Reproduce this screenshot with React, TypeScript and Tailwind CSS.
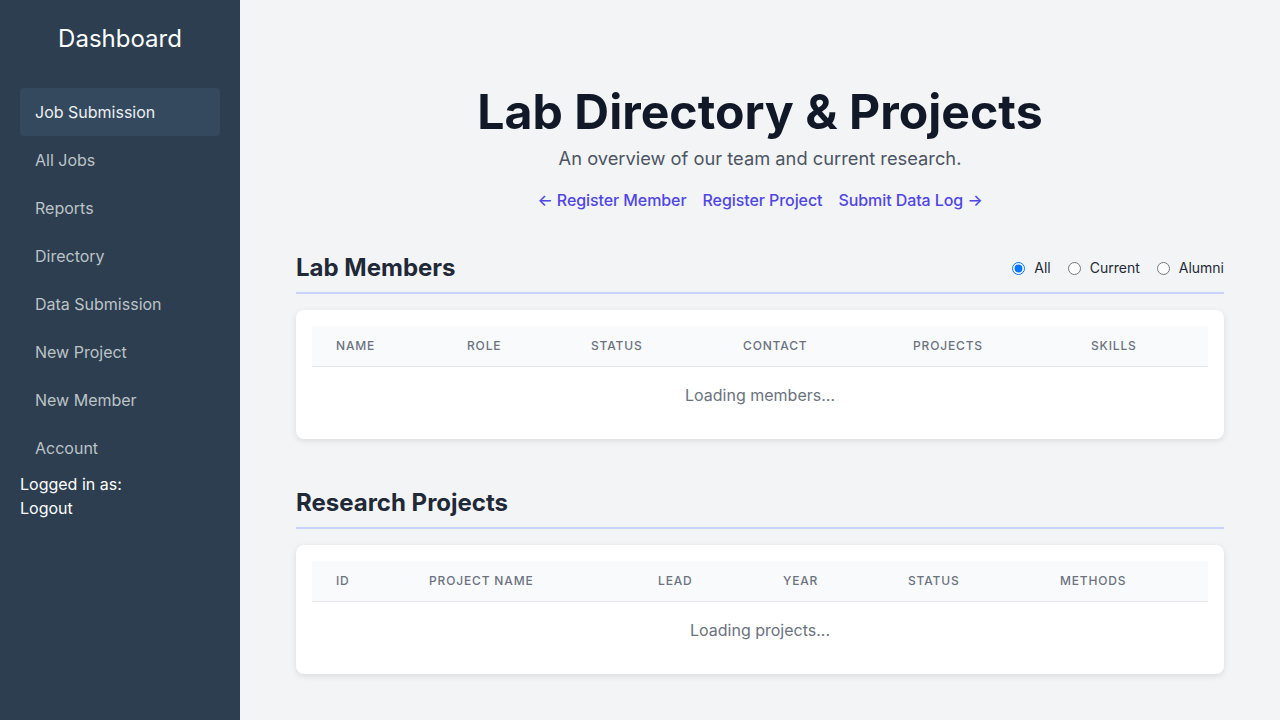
import React from 'react'

const navItems = [
  'Job Submission',
  'All Jobs',
  'Reports',
  'Directory',
  'Data Submission',
  'New Project',
  'New Member',
  'Account',
]

const memberCols = [
  { label: 'Name', w: 'w-[131px]' },
  { label: 'Role', w: 'w-[124px]' },
  { label: 'Status', w: 'w-[152px]' },
  { label: 'Contact', w: 'w-[170px]' },
  { label: 'Projects', w: 'w-[178px]' },
  { label: 'Skills', w: 'w-[141px]' },
]

const projectCols = [
  { label: 'ID', w: 'w-[93px]' },
  { label: 'Project Name', w: 'w-[229px]' },
  { label: 'Lead', w: 'w-[125px]' },
  { label: 'Year', w: 'w-[125px]' },
  { label: 'Status', w: 'w-[152px]' },
  { label: 'Methods', w: 'w-[172px]' },
]

function DataTable({ cols, loading }: { cols: { label: string; w: string }[]; loading: string }) {
  return (
    <div className="bg-white rounded-lg shadow-[0_2px_6px_rgba(0,0,0,0.1)] p-4">
      <table className="w-full border-collapse table-fixed">
        <thead>
          <tr className="bg-[#f9fafb] border-b border-[#e5e7eb]">
            {cols.map((c) => (
              <th
                key={c.label}
                className={`${c.w} text-left px-6 py-3 text-xs leading-4 font-medium uppercase tracking-[0.07em] text-[#6b7280]`}
              >
                {c.label}
              </th>
            ))}
          </tr>
        </thead>
        <tbody>
          <tr>
            <td colSpan={6} className="text-center py-4 text-base leading-6 text-[#6b7280]">
              {loading}
            </td>
          </tr>
        </tbody>
      </table>
    </div>
  )
}

export default function App() {
  return (
    <div className="flex min-h-[720px] font-['Inter',_'Liberation_Sans',_sans-serif]">
      {/* Sidebar */}
      <aside className="w-[240px] shrink-0 bg-[#2c3e50] px-5 pt-[23px]">
        <h2 className="text-2xl leading-8 text-center text-white mb-[33px]">Dashboard</h2>
        <nav className="flex flex-col">
          {navItems.map((item, i) => (
            <a
              key={item}
              href="#"
              className={`block px-[15px] py-3 text-base leading-6 rounded ${
                i === 0 ? 'bg-[#34495e] text-[#ecf0f1]' : 'text-[#bdc3c7]'
              }`}
            >
              {item}
            </a>
          ))}
        </nav>
        <div className="text-white text-base leading-6">
          <p>Logged in as:</p>
          <a href="#" className="block">Logout</a>
        </div>
      </aside>

      {/* Main content */}
      <main className="flex-1 bg-[#f3f4f6] px-[56px] pt-[88px] pb-10">
        <header className="text-center">
          <h1 className="text-[48.2px] leading-[48px] font-bold text-[#111827]">
            Lab Directory &amp; Projects
          </h1>
          <p className="mt-2 text-[18.3px] leading-7 text-[#4b5563]">An overview of our team and current research.</p>
          <div className="mt-4 flex justify-center gap-4 text-base leading-6 font-medium text-[#4f46e5] tracking-[-0.005em]">
            <a href="#">← Register Member</a>
            <a href="#">Register Project</a>
            <a href="#">Submit Data Log →</a>
          </div>
        </header>

        <section className="mt-10">
          <div className="flex items-center justify-between border-b-2 border-[#c7d2fe] pb-2 mb-4">
            <h2 className="text-2xl leading-8 font-bold text-[#1f2937]">Lab Members</h2>
            <div className="flex items-center gap-[17px] text-sm text-[#1f2937]">
              {['All', 'Current', 'Alumni'].map((opt) => (
                <label key={opt} className="flex items-center gap-[9px]">
                  <input type="radio" name="status" defaultChecked={opt === 'All'} className="w-[13px] h-[13px]" />
                  {opt}
                </label>
              ))}
            </div>
          </div>
          <DataTable cols={memberCols} loading="Loading members..." />
        </section>

        <section className="mt-[48px]">
          <div className="border-b-2 border-[#c7d2fe] pb-2 mb-4">
            <h2 className="text-2xl leading-8 font-bold text-[#1f2937]">Research Projects</h2>
          </div>
          <DataTable cols={projectCols} loading="Loading projects..." />
        </section>
      </main>
    </div>
  )
}
